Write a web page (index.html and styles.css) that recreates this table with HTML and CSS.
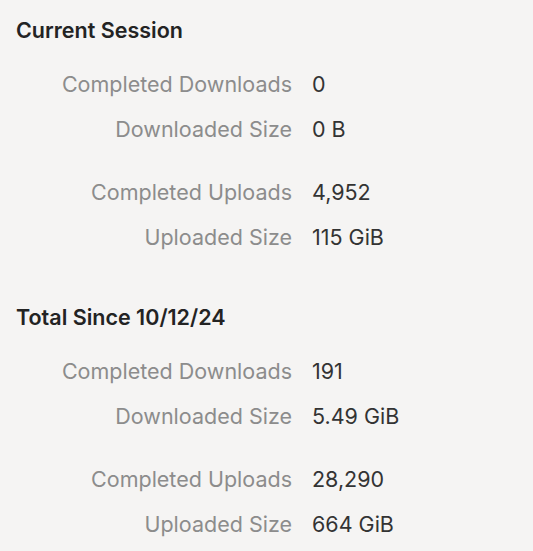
FILE: index.html
```html
<!DOCTYPE html>
<html>
<head>
<meta charset="utf-8">
<link rel="stylesheet" href="styles.css">
</head>
<body>
<div class="page">
  <section class="section">
    <h2 class="section-title">Current Session</h2>
    <div class="group">
      <div class="label">Completed Downloads</div><div class="value">0</div>
      <div class="label">Downloaded Size</div><div class="value">0 B</div>
    </div>
    <div class="group">
      <div class="label">Completed Uploads</div><div class="value">4,952</div>
      <div class="label">Uploaded Size</div><div class="value">115 GiB</div>
    </div>
  </section>
  <section class="section">
    <h2 class="section-title">Total Since 10/12/24</h2>
    <div class="group">
      <div class="label">Completed Downloads</div><div class="value">191</div>
      <div class="label">Downloaded Size</div><div class="value">5.49 GiB</div>
    </div>
    <div class="group">
      <div class="label">Completed Uploads</div><div class="value">28,290</div>
      <div class="label">Uploaded Size</div><div class="value">664 GiB</div>
    </div>
  </section>
</div>
</body>
</html>
```

FILE: styles.css
```css
html, body {
  margin: 0;
  padding: 0;
  background: #f5f4f3;
}
body {
  font-family: Inter, "Noto Sans", sans-serif;
  width: 533px;
  height: 551px;
  overflow: hidden;
}
.page {
  padding: 18px 0 0 16px;
}
.section + .section {
  margin-top: 44.5px;
}
.section-title {
  margin: 0;
  font-size: 21.5px;
  font-weight: 600;
  line-height: 24px;
  color: #232323;
}
.group {
  display: grid;
  grid-template-columns: 276px auto;
  column-gap: 20px;
  line-height: 45px;
  font-size: 21.5px;
  margin-top: 18px;
}
.section-title + .group {
  margin-top: 20px;
}
.label {
  text-align: right;
  color: #8c8c8c;
}
.value {
  color: #333333;
}
```
